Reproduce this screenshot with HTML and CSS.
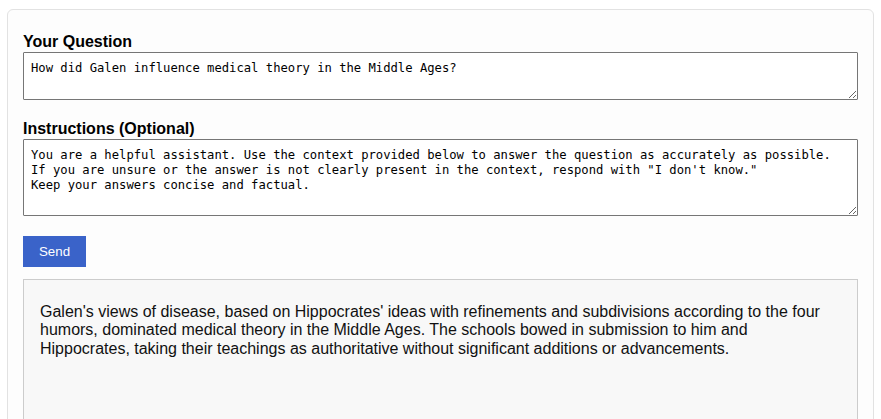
FILE: index.html
```html
<!DOCTYPE html>
<html>
<head>
<meta charset="utf-8">
<link rel="stylesheet" href="styles.css">
</head>
<body>
<div class="card">
  <label class="label" for="q">Your Question</label>
  <textarea id="q" class="field field-q">How did Galen influence medical theory in the Middle Ages?</textarea>
  <label class="label label-2" for="i">Instructions (Optional)</label>
  <textarea id="i" class="field field-i">You are a helpful assistant. Use the context provided below to answer the question as accurately as possible.
If you are unsure or the answer is not clearly present in the context, respond with "I don't know."
Keep your answers concise and factual.</textarea>
  <button class="send" type="button">Send</button>
  <div class="answer">
    <p>Galen's views of disease, based on Hippocrates' ideas with refinements and subdivisions according to the four humors, dominated medical theory in the Middle Ages. The schools bowed in submission to him and Hippocrates, taking their teachings as authoritative without significant additions or advancements.</p>
  </div>
</div>
</body>
</html>
```
FILE: styles.css
```css
html, body {
  margin: 0;
  background: #ffffff;
}
body {
  padding: 9px 7px 0;
  font-family: "Liberation Sans", Arial, sans-serif;
  color: #111;
}
.card {
  border: 1px solid #e2e2e2;
  border-radius: 6px;
  background: #fdfdfd;
  padding: 23px 15px 20px;
  display: flex;
  flex-direction: column;
  align-items: flex-start;
}
.label {
  display: block;
  font-weight: bold;
  font-size: 16px;
  line-height: 18px;
  margin-bottom: 1px;
  color: #000;
}
.label-2 {
  margin-top: 20px;
}
.field {
  box-sizing: border-box;
  width: 100%;
  margin: 0;
  border: 1px solid #767676;
  border-radius: 1px;
  background: #fff;
  padding: 8px 7px 6px;
  font-family: "DejaVu Sans Mono", "Liberation Mono", monospace;
  font-size: 12.2px;
  line-height: 15px;
  color: #000;
  resize: vertical;
}
.field-q {
  height: 48px;
}
.field-i {
  height: 77px;
}
.send {
  margin-top: 20px;
  height: 31px;
  width: 63px;
  border: none;
  border-radius: 0;
  background: #3a63c9;
  color: #fff;
  font-family: "Liberation Sans", Arial, sans-serif;
  font-size: 13.33px;
  padding: 0;
}
.answer {
  box-sizing: border-box;
  width: 100%;
  margin-top: 12px;
  border: 1px solid #cccccc;
  background: #f8f8f8;
  padding: 7px 16px;
  min-height: 220px;
}
.answer p {
  margin: 16px 0;
  font-size: 16px;
  line-height: 18.4px;
  color: #111;
}
```
